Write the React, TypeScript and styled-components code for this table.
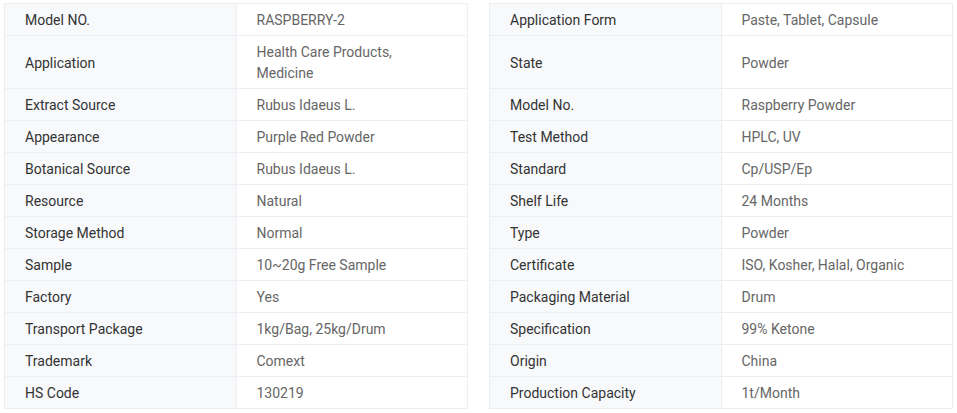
import React from "react";
import styled, { createGlobalStyle } from "styled-components";

const Global = createGlobalStyle`
  html, body { margin: 0; padding: 0; background: #fff; }
  body { font-family: Roboto, "Liberation Sans", Arial, sans-serif; }
`;

const Page = styled.div`
  display: grid;
  grid-template-columns: 1fr 1fr;
  column-gap: 21px;
  padding: 3px 4px;
  width: 957px;
  box-sizing: border-box;
`;

const Table = styled.table`
  width: 100%;
  border-collapse: collapse;
  table-layout: fixed;
  border: 1px solid #eceef2;
`;

const Row = styled.tr<{ $tall?: boolean }>`
  border-bottom: 1px solid #eceef2;
  height: ${(p) => (p.$tall ? "53px" : "32px")};
`;

const Label = styled.td`
  width: 50%;
  background: #f8f9fb;
  color: #333;
  border-right: 1px solid #eceef2;
  font-size: 14px;
  line-height: 21px;
  padding: 6px 20px 4px;
  vertical-align: middle;
`;

const Value = styled.td`
  width: 50%;
  background: #fff;
  color: #666;
  font-size: 14px;
  line-height: 21px;
  padding: 6px 20px 4px;
  vertical-align: middle;
`;

const left: [string, string][] = [
  ["Model NO.", "RASPBERRY-2"],
  ["Application", "Health Care Products, Medicine"],
  ["Extract Source", "Rubus Idaeus L."],
  ["Appearance", "Purple Red Powder"],
  ["Botanical Source", "Rubus Idaeus L."],
  ["Resource", "Natural"],
  ["Storage Method", "Normal"],
  ["Sample", "10~20g Free Sample"],
  ["Factory", "Yes"],
  ["Transport Package", "1kg/Bag, 25kg/Drum"],
  ["Trademark", "Comext"],
  ["HS Code", "130219"],
];

const right: [string, string][] = [
  ["Application Form", "Paste, Tablet, Capsule"],
  ["State", "Powder"],
  ["Model No.", "Raspberry Powder"],
  ["Test Method", "HPLC, UV"],
  ["Standard", "Cp/USP/Ep"],
  ["Shelf Life", "24 Months"],
  ["Type", "Powder"],
  ["Certificate", "ISO, Kosher, Halal, Organic"],
  ["Packaging Material", "Drum"],
  ["Specification", "99% Ketone"],
  ["Origin", "China"],
  ["Production Capacity", "1t/Month"],
];

const SpecTable = ({ rows }: { rows: [string, string][] }) => (
  <Table>
    <tbody>
      {rows.map(([k, v], i) => (
        <Row key={k} $tall={i === 1}>
          <Label>{k}</Label>
          <Value>{v}</Value>
        </Row>
      ))}
    </tbody>
  </Table>
);

export default function App() {
  return (
    <>
      <Global />
      <Page>
        <SpecTable rows={left} />
        <SpecTable rows={right} />
      </Page>
    </>
  );
}
